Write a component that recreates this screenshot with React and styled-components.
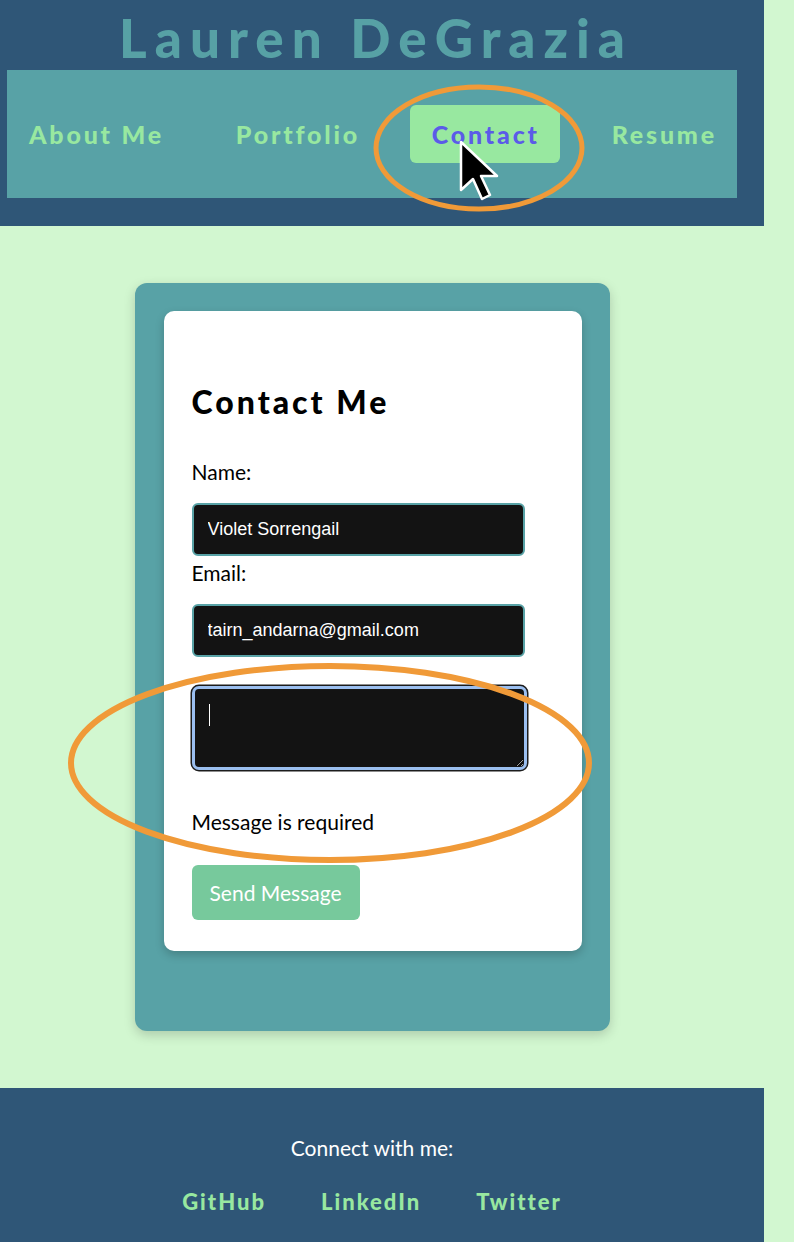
import React from 'react';
import styled, { createGlobalStyle } from 'styled-components';

const GlobalStyle = createGlobalStyle`
  html, body {
    margin: 0;
    padding: 0;
    background-color: #d2f7d0;
  }
  body {
    font-family: 'Lato', 'Open Sans', sans-serif;
  }
`;

const Page = styled.div`
  position: relative;
  width: 764px;
  min-height: 1242px;
`;

const Header = styled.header`
  background-color: #2f5677;
  padding: 0 20px 28px 0;
`;

const Title = styled.h1`
  margin: 0;
  height: 70px;
  padding: 3px 0 0 8px;
  box-sizing: border-box;
  line-height: 70px;
  text-align: center;
  font-size: 53px;
  font-weight: 900;
  letter-spacing: 8px;
  color: #57a1a5;
`;

const Nav = styled.nav`
  height: 128px;
  margin: 0 7px;
  display: flex;
  align-items: center;
  justify-content: space-between;
  background-color: #58a2a6;
`;

const NavLink = styled.a`
  padding: 14px 20px 14px 22px;
  line-height: 30px;
  border-radius: 6px;
  font-size: 25px;
  font-weight: 900;
  letter-spacing: 2.8px;
  color: ${(p) => (p.$active ? '#5b5be8' : '#98e8a0')};
  background-color: ${(p) => (p.$active ? '#98e8a0' : 'transparent')};
  text-decoration: none;
`;

const Main = styled.main`
  padding: 57px 20px 57px 0;
  display: flex;
  justify-content: center;
`;

const CardFrame = styled.div`
  width: 475px;
  box-sizing: border-box;
  padding: 28px 28px 80px 29px;
  background-color: #58a2a6;
  border-radius: 12px;
  box-shadow: 0 4px 12px rgba(0, 0, 0, 0.18);
`;

const Card = styled.div`
  background-color: #ffffff;
  border-radius: 10px;
  padding: 0 28px 31px;
  box-shadow: 0 4px 10px rgba(0, 0, 0, 0.2);
  overflow: hidden;
`;

const Heading = styled.h2`
  margin: 72px 0 0;
  font-size: 32px;
  line-height: 38px;
  font-weight: 900;
  letter-spacing: 3px;
  color: #000;
`;

const Form = styled.form`
  display: flex;
  flex-direction: column;
  align-items: flex-start;
`;

const Label = styled.label`
  display: block;
  margin-top: ${(p) => p.$top || 0}px;
  font-size: 21px;
  line-height: 26px;
  color: #000;
`;

const Input = styled.input`
  width: 333px;
  height: 53px;
  box-sizing: border-box;
  margin-top: 18px;
  padding: 0 14px;
  background-color: #131313;
  border: 2px solid #58a2a6;
  border-radius: 6px;
  font-family: 'Liberation Sans', Arial, sans-serif;
  font-size: 18px;
  color: #ffffff;
  outline: none;
`;

const TextAreaWrap = styled.div`
  position: relative;
  margin-top: 29px;
  display: flex;
`;

const TextArea = styled.textarea`
  width: 335px;
  height: 84px;
  box-sizing: border-box;
  padding: 8px 14px;
  background-color: #131313;
  border: 3px solid #9bbff0;
  border-radius: 7px;
  box-shadow: 0 0 0 1.5px #1c1c1c;
  font-family: 'Liberation Sans', Arial, sans-serif;
  font-size: 18px;
  color: #ffffff;
  outline: none;
  resize: vertical;
`;

const Caret = styled.span`
  position: absolute;
  left: 17px;
  top: 18px;
  width: 1.5px;
  height: 22px;
  background-color: #ffffff;
`;

const ErrorText = styled.p`
  margin: 39px 0 0;
  font-size: 21px;
  line-height: 26px;
  color: #000;
`;

const SendButton = styled.button`
  margin-top: 30px;
  width: 168px;
  height: 55px;
  border: none;
  border-radius: 6px;
  background-color: #77c99c;
  color: #ffffff;
  font-family: 'Lato', sans-serif;
  font-size: 21px;
`;

const Footer = styled.footer`
  background-color: #2f5677;
  padding: 47px 20px 40px 0;
  text-align: center;
`;

const FooterText = styled.p`
  margin: 0;
  font-size: 21px;
  line-height: 26px;
  color: #ffffff;
`;

const FooterLinks = styled.div`
  margin-top: 28px;
  display: flex;
  justify-content: center;
  gap: 55px;
`;

const FooterLink = styled.a`
  font-size: 22px;
  line-height: 26px;
  font-weight: 900;
  letter-spacing: 2px;
  color: #98e8a0;
  text-decoration: none;
`;

const Overlay = styled.svg`
  position: absolute;
  left: 0;
  top: 0;
  pointer-events: none;
`;

const navItems = ['About Me', 'Portfolio', 'Contact', 'Resume'];

export default function App() {
  return (
    <Page>
      <GlobalStyle />
      <Header>
        <Title>Lauren DeGrazia</Title>
        <Nav>
          {navItems.map((item) => (
            <NavLink key={item} href="#" $active={item === 'Contact'}>
              {item}
            </NavLink>
          ))}
        </Nav>
      </Header>

      <Main>
        <CardFrame>
          <Card>
            <Heading>Contact Me</Heading>
            <Form onSubmit={(e) => e.preventDefault()}>
              <Label $top={38}>Name:</Label>
              <Input defaultValue="Violet Sorrengail" />
              <Label $top={4}>Email:</Label>
              <Input defaultValue="tairn_andarna@gmail.com" />
              <TextAreaWrap>
                <TextArea aria-label="Message" />
                <Caret />
              </TextAreaWrap>
              <ErrorText>Message is required</ErrorText>
              <SendButton type="submit">Send Message</SendButton>
            </Form>
          </Card>
        </CardFrame>
      </Main>

      <Footer>
        <FooterText>Connect with me:</FooterText>
        <FooterLinks>
          <FooterLink href="#">GitHub</FooterLink>
          <FooterLink href="#">LinkedIn</FooterLink>
          <FooterLink href="#">Twitter</FooterLink>
        </FooterLinks>
      </Footer>

      {/* screenshot annotations */}
      <Overlay width="794" height="1242" viewBox="0 0 794 1242">
        <ellipse cx="479" cy="148" rx="103" ry="61" fill="none" stroke="#f09a38" strokeWidth="5" />
        <ellipse cx="330" cy="763" rx="259" ry="97" fill="none" stroke="#f09a38" strokeWidth="6" />
        <path
          d="M461 142 L461 190 L473 179 L482 199 L490 195 L481 176 L497 176 Z"
          fill="#000"
          stroke="#fff"
          strokeWidth="2.5"
          strokeLinejoin="round"
        />
      </Overlay>
    </Page>
  );
}
